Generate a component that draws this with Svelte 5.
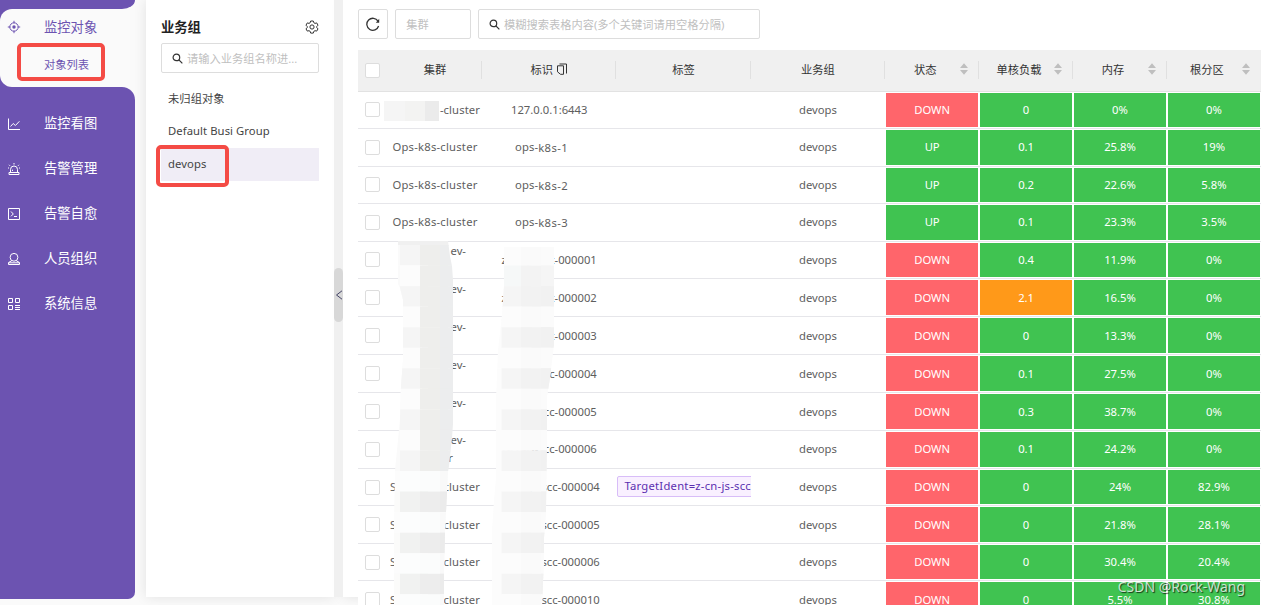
<script lang="ts">
	type Row = {
		cluster: string[];
		ident: string;
		shift?: number;
		tag?: string;
		status: string;
		load: number;
		mem: string;
		disk: string;
	};

	const menus = [
		{ icon: 'chart', name: '监控看图' },
		{ icon: 'alert', name: '告警管理' },
		{ icon: 'code', name: '告警自愈' },
		{ icon: 'user', name: '人员组织' },
		{ icon: 'system', name: '系统信息' }
	];

	const groups = ['未归组对象', 'Default Busi Group', 'devops'];
	let current = $state('devops');

	const plainHeads = ['集群', '标识', '标签', '业务组'];
	const sortHeads = ['状态', '单核负载', '内存', '根分区'];

	const ops = ['Ops-k8s-cluster'];
	const dev = ['ev-', '\u00a0'];
	const devLast = ['ev-', 'r'];
	const named = ['S', '-cluster'];

	const rows: Row[] = [
		{ cluster: ['', '-cluster'], ident: '127.0.0.1:6443', status: 'DOWN', load: 0, mem: '0%', disk: '0%' },
		{ cluster: ops, ident: 'k8s-1', status: 'UP', load: 0.1, mem: '25.8%', disk: '19%' },
		{ cluster: ops, ident: 'k8s-2', status: 'UP', load: 0.2, mem: '22.6%', disk: '5.8%' },
		{ cluster: ops, ident: 'k8s-3', status: 'UP', load: 0.1, mem: '23.3%', disk: '3.5%' },
		{ cluster: dev, ident: 'z-cn-js-scc-000001', status: 'DOWN', load: 0.4, mem: '11.9%', disk: '0%' },
		{ cluster: dev, ident: 'z-cn-js-scc-000002', status: 'DOWN', load: 2.1, mem: '16.5%', disk: '0%' },
		{ cluster: dev, ident: 'z-cn-js-scc-000003', status: 'DOWN', load: 0, mem: '13.3%', disk: '0%' },
		{ cluster: dev, ident: 'z-cn-js-scc-000004', status: 'DOWN', load: 0.1, mem: '27.5%', disk: '0%' },
		{ cluster: dev, ident: 'z-cn-js-scc-000005', status: 'DOWN', load: 0.3, mem: '38.7%', disk: '0%' },
		{ cluster: devLast, ident: 'z-cn-js-scc-000006', status: 'DOWN', load: 0.1, mem: '24.2%', disk: '0%' },
		{ cluster: named, ident: 'z-cn-js-scc-000004', shift: 3, tag: 'TargetIdent=z-cn-js-scc-000004', status: 'DOWN', load: 0, mem: '24%', disk: '82.9%' },
		{ cluster: named, ident: 'z-cn-js-scc-000005', shift: 3, status: 'DOWN', load: 0, mem: '21.8%', disk: '28.1%' },
		{ cluster: named, ident: 'z-cn-js-scc-000006', shift: 3, status: 'DOWN', load: 0, mem: '30.4%', disk: '20.4%' },
		{ cluster: named, ident: 'z-cn-js-scc-000010', shift: 3, status: 'DOWN', load: 0, mem: '5.5%', disk: '30.8%' }
	];

	const isTall = (row: Row) => row.cluster[0] === 'ev-';

	// masked parts of the two name columns, top to bottom
	const bands = Array.from({ length: 18 }, (_, i) => {
		const even = i % 2 === 0;
		return {
			y: 245 + i * 20.55,
			a: i < 11
				? ['#fafafa', even ? '#f5f5f5' : '#fcfcfc', '#eeeeec', '#ecedee']
				: even
					? ['#fbfbfa', '#f1f2f1', '#ededed', '#ebebeb']
					: ['#fcfcfc', '#fcfdfd', '#fbfcfc', '#f9f9f9'],
			b: even && i > 1
				? ['#fcfcfc', '#f5f5f5', '#f2f2f2', '#f1f1f1']
				: i === 1
					? ['#fcfcfc', '#f6f8f8', '#f3f3f3', '#f5f5f5']
					: ['#fcfcfc', '#fcfcfc', '#fafafa', '#fbfbfb']
		};
	});
	const ax = [394, 400, 420, 440];
	const bx = [492, 501.5, 521, 541];
</script>

<div class="page">
	<aside>
		<div class="cap"></div>
		<div class="active">
			<div class="open">
				<div class="item">
					<svg viewBox="0 0 14 14"><circle cx="7" cy="7" r="4.2" /><circle class="dot" cx="7" cy="7" r="1.7" /><path d="M7 .8v2.5M7 10.7v2.5M.8 7h2.5M10.7 7h2.5" /></svg>
					<span>监控对象</span>
				</div>
				<div class="sub">对象列表</div>
			</div>
		</div>
		<nav>
			{#each menus as menu}
				<div class="item">
					<svg viewBox="0 0 14 14">
						{#if menu.icon === 'chart'}
							<path d="M1.5 1.5v11h11.5M3.5 9.5l2.7-3 2.2 2 4-4.2" />
						{:else if menu.icon === 'alert'}
							<path d="M3.5 10.5V7.5a3.5 3.5 0 0 1 7 0v3M2 10.5h10v2H2zM7 1v1.5M2 2.8l1 1M12 2.8l-1 1M1 6h1M12 6h1M5.5 9V7.7" />
						{:else if menu.icon === 'code'}
							<path d="M1.5 1.5h11v11h-11zM4 4.5L6.3 7 4 9.3M7 9.5h3" />
						{:else if menu.icon === 'user'}
							<circle cx="7" cy="5.3" r="3.9" /><path d="M4.7 8.8l-3.2 1.7v2h11v-2l-3.2-1.7M2 10.8h10" />
						{:else}
							<path d="M1.5 1.5h4v4h-4zM8.5 1.5h4v4h-4zM1.5 8.5h4v4h-4zM8 8.5h5M8 10.5h5M8 12.5h5" />
						{/if}
					</svg>
					<span>{menu.name}</span>
				</div>
			{/each}
		</nav>
	</aside>

	<section class="groups">
		<header>
			<h1>业务组</h1>
			<svg viewBox="0 0 14 14"><path d="M5.7 1h2.6l.5 1.7 1.2.7 1.7-.5L13 5.2l-1.2 1.2v1.3L13 8.9l-1.3 2.2-1.7-.4-1.2.7-.5 1.7H5.7l-.5-1.7-1.2-.7-1.7.4L1 8.9l1.2-1.2V6.4L1 5.2l1.3-2.3 1.7.5 1.2-.7z" /><circle cx="7" cy="7" r="2.1" /></svg>
		</header>
		<div class="input">
			<svg viewBox="0 0 12 12"><circle cx="4.8" cy="4.8" r="3.6" /><path d="M7.5 7.5l3.8 3.8" /></svg>
			<span>请输入业务组名称进...</span>
		</div>
		<ul>
			{#each groups as group}
				<li class:selected={group === current}>
					<button onclick={() => (current = group)}>{group}</button>
				</li>
			{/each}
		</ul>
	</section>

	<div class="split">
		<div class="handle"><svg viewBox="0 0 8 10"><path d="M7 .8L1.5 5 7 9.2" /></svg></div>
	</div>

	<main>
		<div class="toolbar">
			<div class="input refresh"><svg viewBox="0 0 14 14"><path d="M12 4.2A6 6 0 1 0 12.6 9" /><path class="tip" d="M13.2 1.8v3.9H9.8z" /></svg></div>
			<div class="input pick">集群</div>
			<div class="input search">
				<svg viewBox="0 0 12 12"><circle cx="4.8" cy="4.8" r="3.6" /><path d="M7.5 7.5l3.8 3.8" /></svg>
				<span>模糊搜索表格内容(多个关键词请用空格分隔)</span>
			</div>
		</div>

		<div class="table">
			<div class="row head">
				<div class="cell"><i class="check"></i></div>
				{#each plainHeads as head}
					<div class="cell line">
						{head}
						{#if head === '标识'}
							<svg class="copy" viewBox="0 0 12 12"><path d="M1.5 2.8h6v8.5H4.5l-3-2.5zM3.5 1h7v9.5" /></svg>
						{/if}
					</div>
				{/each}
				{#each sortHeads as head}
					<div class="cell line sort">
						<span>{head}</span>
						<svg viewBox="0 0 8 12"><path d="M4 .3L8 5H0zM4 11.7L0 7h8z" /></svg>
					</div>
				{/each}
			</div>
			{#each rows as row}
				<div class="row" class:tall={isTall(row)}>
					<div class="cell"><i class="check"></i></div>
					{#if isTall(row)}
						<div class="cell wrap"><span>{row.cluster[0]}</span><span>{row.cluster[1]}</span></div>
					{:else if row.cluster.length > 1}
						<div class="cell ends"><span>{row.cluster[0]}</span><span>{row.cluster[1]}</span></div>
					{:else}
						<div class="cell wide">{row.cluster[0]}</div>
					{/if}
					{#if row.cluster === ops}
						<div class="cell ops"><span>ops-</span><span class="k8s">{row.ident}</span></div>
					{:else}
						<div class="cell" style="padding-left: {(row.shift ?? 0) * 2}px">{row.ident}</div>
					{/if}
					<div class="cell tags">{#if row.tag}<span class="tag">{row.tag}</span>{/if}</div>
					<div class="cell">devops</div>
					<div class="cell"><b class:down={row.status === 'DOWN'}>{row.status}</b></div>
					<div class="cell"><b class:warn={row.load > 1}>{row.load}</b></div>
					<div class="cell"><b>{row.mem}</b></div>
					<div class="cell"><b>{row.disk}</b></div>
				</div>
			{/each}
		</div>
	</main>

	<svg class="mask" viewBox="0 0 1261 605">
		<clipPath id="a"><path d="M398 241H448L450 256 452 266 453 280V424L452 438 449 466 448 472 446 512 445 532 444 574V605H394V520L395 470 398 440 400 418 401 385 403 360V300L400 288 398 284z" /></clipPath>
		<clipPath id="b"><path d="M504 247H554V345L550 378 547 396V430L546 512 544 538V560L542 605H492V530L494 500 496 478V400L498 350 502 315 504 285z" /></clipPath>
		<g clip-path="url(#a)">
			<rect x="394" y="241" width="60" height="5" fill="#f0f0f0" />
			{#each bands as band}
				{#each band.a as fill, i}
					<rect x={ax[i]} y={band.y} width="28" height="20.8" {fill} />
				{/each}
			{/each}
		</g>
		<g clip-path="url(#b)">
			{#each bands as band}
				{#each band.b as fill, i}
					<rect x={bx[i]} y={band.y} width="30" height="20.8" {fill} />
				{/each}
			{/each}
		</g>
		<path fill="#f5f5f5" d="M384 101h21v20h-21z" />
		<path fill="#f3f3f2" d="M405 101h20v20h-20z" />
		<path fill="#ebebeb" d="M425 101h14v20h-14z" />
	</svg>
	<div class="frame first"></div>
	<div class="frame second"></div>
	<div class="watermark">CSDN @Rock-Wang</div>
</div>

<style>
	:global(body) {
		margin: 0;
	}

	.page {
		position: relative;
		display: flex;
		width: 1261px;
		height: 605px;
		overflow: hidden;
		background: #fafafa;
		color: #333;
		font: 11.25px 'Noto Sans', 'Noto Sans CJK SC', sans-serif;
	}

	.page * {
		box-sizing: border-box;
	}

	svg {
		flex: none;
		fill: none;
		stroke: currentColor;
	}

	aside {
		width: 135px;
		height: 599px;
		margin-right: 11px;
		display: flex;
		flex-direction: column;
		color: #fff;
		flex: none;
	}

	.cap {
		height: 9px;
		background: #6c53b1;
		border-bottom-right-radius: 13px 9px;
	}

	.active {
		height: 78px;
		background: linear-gradient(90deg, #6c53b1 50%, #fafafa 50%);
	}

	.open {
		height: 100%;
		background: #fafafa;
		border-radius: 12px 0 0 12px;
		color: #6c53b1;
	}

	.item {
		height: 45px;
		padding-left: 7px;
		display: flex;
		align-items: center;
		gap: 23px;
		font-size: 13.3px;

		& svg {
			width: 14px;
			height: 14px;
		}

		& span {
			padding-bottom: 2px;
		}
	}

	.open .item {
		height: 36px;
	}

	.dot,
	.tip {
		fill: currentColor;
		stroke: none;
	}

	.sub {
		padding-left: 44px;
		line-height: 39px;
	}

	nav {
		flex: 1;
		padding-top: 14px;
		background: #6c53b1;
		border-radius: 0 13px 7px 0;
	}

	.groups {
		width: 188px;
		height: 597px;
		padding: 0 15px;
		flex: none;
		background: #fff;
		box-shadow: 0 0 12px rgba(0, 0, 0, 0.1);

		& header {
			height: 43px;
			padding-top: 10px;
			display: flex;
			align-items: center;
			justify-content: space-between;
		}

		& h1 {
			margin: 0;
			padding-bottom: 1px;
			font-size: 13.3px;
			color: #222;
		}

		& header svg {
			width: 14px;
			height: 14px;
		}
	}

	.input {
		height: 30px;
		display: flex;
		align-items: center;
		gap: 4px;
		padding: 0 10px;
		border: 1px solid #ddd;
		border-radius: 2px;
		color: #bfbfbf;
		background: #fff;
		white-space: nowrap;

		& svg {
			width: 11px;
			height: 11px;
			color: #333;
			stroke-width: 1.3;
		}

		& span {
			padding-bottom: 1px;
		}
	}

	ul {
		list-style: none;
		margin: 9px 0 0;
		padding: 0;
	}

	li {
		height: 33px;
		display: flex;

		&.selected {
			background: #f0edf6;
		}
	}

	button {
		border: 0;
		padding: 0 7px 2px;
		background: none;
		font: inherit;
		letter-spacing: 0.08px;
		color: #444;
	}

	.split {
		position: relative;
		width: 9px;
		height: 597px;
		background: #f0f0f0;
		flex: none;
		z-index: 1;
	}

	.handle {
		height: 54px;
		margin-top: 268px;
		border-radius: 5px;
		background: #d8d8d8;
		display: flex;
		align-items: center;
		justify-content: flex-end;

		& svg {
			width: 8px;
			height: 10px;
			color: #446;
		}
	}

	main {
		flex: 1;
		height: 597px;
		padding: 9px 0 0 15px;
		min-width: 0;
		background: #fff;
		box-shadow: 0 0 12px rgba(0, 0, 0, 0.1);
	}

	.toolbar {
		display: flex;
		gap: 7.3px;
		margin-bottom: 10.5px;
	}

	.refresh {
		width: 30px;
		padding: 0;
		justify-content: center;

		& svg {
			width: 14px;
			height: 14px;
		}
	}

	.pick {
		width: 75.4px;
		padding-bottom: 1px;
	}

	.search {
		width: 282px;
	}

	.table {
		width: 903px;
		background: #fff;
	}

	.row {
		display: grid;
		grid-template-columns: 30px 94px repeat(3, 134.4px) repeat(4, 93.95px);
		height: 37.5px;
		border-bottom: 1px solid #e6e6ea;
		color: #5e5e5e;

		&.tall {
			height: 37.92px;
		}

		&.head {
			height: 42px;
			background: #f0f0f0;
			color: #333;
			border-color: #e2e2e2;

			& .line {
				padding-bottom: 3px;
			}
		}
	}

	.cell {
		position: relative;
		display: flex;
		align-items: center;
		justify-content: center;
		min-width: 0;
		white-space: nowrap;

		& b {
			align-self: stretch;
			flex: 1;
			margin: 1px;
			padding-bottom: 1px;
			display: flex;
			align-items: center;
			justify-content: center;
			background: #40c351;
			color: #fff;
			font-weight: 400;
		}

		& .down {
			background: #ff656b;
		}

		& .warn {
			background: #ff9919;
		}
	}

	.row:not(.head) .cell:nth-child(-n + 5):not(:first-child) {
		padding-bottom: 1px;
	}

	.check {
		width: 15px;
		height: 15px;
		margin-right: 1px;
		border: 1px solid #ddd;
		border-radius: 2px;
		background: #fff;
	}

	.line:not(:last-child)::after {
		content: '';
		position: absolute;
		right: 0;
		top: 11px;
		height: 18px;
		border-right: 1px solid #e0e0e0;
	}

	.copy {
		width: 12px;
		height: 12px;
		margin-left: 3px;
	}

	.sort {
		& span {
			flex: 1;
			text-align: center;
			padding-left: 5px;
		}

		& svg {
			width: 8px;
			height: 12px;
			margin-right: 11px;
			fill: #bfbfbf;
			stroke: none;
		}
	}

	.wide {
		letter-spacing: 0.22px;
	}

	.ends {
		justify-content: space-between;
		padding: 0 2px;
		letter-spacing: 0.1px;
	}

	.wrap {
		flex-direction: column;
		align-items: flex-end;
		justify-content: center;
		padding-right: 16px;
		line-height: 17.5px;

		& span:last-child {
			padding-right: 13px;
		}
	}

	.ops {
		justify-content: flex-start;
		padding-left: 33px;
		letter-spacing: 0.1px;
	}

	.k8s {
		padding-top: 2px;
		letter-spacing: 0.4px;
	}

	.tags {
		justify-content: flex-start;
		overflow: hidden;
		padding-left: 1px;
	}

	.tag {
		height: 21px;
		padding: 0 6px;
		line-height: 18px;
		letter-spacing: 0.24px;
		border: 1px solid #d8bdf8;
		border-radius: 2px;
		background: #f9f0ff;
		color: #5b2fb0;
	}

	.mask {
		position: absolute;
		inset: 0;
		width: 1261px;
		height: 605px;
		stroke: none;
		pointer-events: none;
		z-index: 2;
	}

	/* highlight boxes drawn over the menu and the group list */
	.frame {
		position: absolute;
		border: 4px solid #f44b45;
		border-radius: 5px;
		pointer-events: none;
	}

	.first {
		left: 17px;
		top: 43px;
		width: 88px;
		height: 38px;
	}

	.second {
		left: 156px;
		top: 145px;
		width: 73px;
		height: 42px;
	}

	.watermark {
		position: absolute;
		right: 16px;
		bottom: 9px;
		font-size: 14px;
		line-height: 19px;
		color: rgba(255, 255, 255, 0.75);
		text-shadow: 1px 1px 1px rgba(0, 0, 0, 0.7);
	}
</style>
